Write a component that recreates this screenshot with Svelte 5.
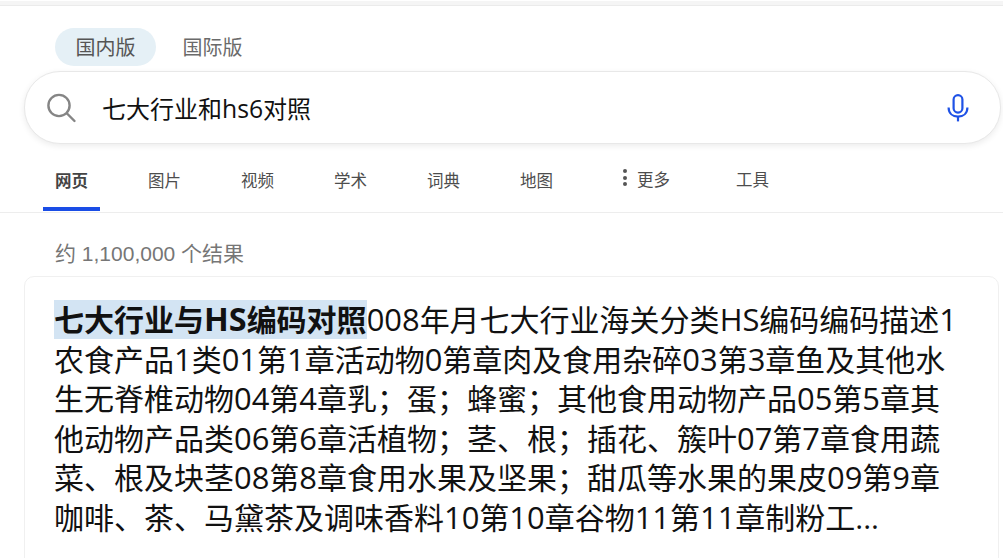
<script>
  const navItems = ['图片', '视频', '学术', '词典', '地图'];
  const split = (text) => text.match(/[0-9A-Za-z]+|[^0-9A-Za-z]+/g);
  const title = split('七大行业与HS编码对照');
  const body = split('008年月七大行业海关分类HS编码编码描述1农食产品1类01第1章活动物0第章肉及食用杂碎03第3章鱼及其他水生无脊椎动物04第4章乳；蛋；蜂蜜；其他食用动物产品05第5章其他动物产品类06第6章活植物；茎、根；插花、簇叶07第7章食用蔬菜、根及块茎08第8章食用水果及坚果；甜瓜等水果的果皮09第9章咖啡、茶、马黛茶及调味香料10第10章谷物11第11章制粉工...');
  const isLatin = (run) => /^[0-9A-Za-z]/.test(run);
</script>

<div class="page">
  <div class="topband"></div>
  <div class="regions">
    <span class="pill active">国内版</span>
    <span class="pill">国际版</span>
  </div>
  <div class="search">
    <svg class="mag" width="32" height="32" viewBox="0 0 32 32" fill="none" stroke="#858585" stroke-width="2.4">
      <circle cx="13" cy="13.5" r="10.6" />
      <path d="M21 21.5 L28.5 29" stroke-linecap="round" />
    </svg>
    <span class="query">七大行业和<span class="lat">hs6</span>对照</span>
    <svg class="mic" width="22" height="28" viewBox="0 0 22 28" fill="none" stroke="#1f52e6" stroke-width="2.2">
      <rect x="6.6" y="1.2" width="8.8" height="17.4" rx="4.4" />
      <path d="M1.6 13.5 C1.6 19.5 5.8 22.6 11 22.6 C16.2 22.6 20.4 19.5 20.4 13.5" />
      <path d="M11 22.6 V27.4" />
    </svg>
  </div>
  <nav class="nav">
    <span class="item current">网页</span>
    {#each navItems as item}
      <span class="item">{item}</span>
    {/each}
    <span class="item more">
      <span class="dots"><i></i><i></i><i></i></span>更多
    </span>
    <span class="item tools">工具</span>
  </nav>
  <div class="count">约 1,100,000 个结果</div>
  <div class="card">
    <p><strong>{#each title as run}{#if isLatin(run)}<span class="lat">{run}</span>{:else}{run}{/if}{/each}</strong>{#each body as run}{#if isLatin(run)}<span class="lat">{run}</span>{:else}{run}{/if}{/each}</p>
  </div>
</div>

<style>
  :global(body) {
    margin: 0;
    background: #fff;
  }
  .page {
    width: 1003px;
    height: 558px;
    overflow: hidden;
    background: #fff;
    font-family: "Open Sans", "Noto Sans CJK SC", sans-serif;
  }
  .topband {
    height: 5px;
    margin-top: 1px;
    background: #f5f5f5;
    border-bottom: 1px solid #ebebeb;
    box-sizing: border-box;
  }
  .regions {
    display: flex;
    align-items: center;
    margin: 22px 0 0 55px;
    height: 38px;
    gap: 6px;
  }
  .pill {
    padding: 0 20.5px;
    height: 38px;
    line-height: 39px;
    border-radius: 19px;
    font-size: 20px;
    color: #6a6a6a;
  }
  .pill.active {
    background: #e5f0f6;
    color: #555;
  }
  .search {
    display: flex;
    align-items: center;
    box-sizing: border-box;
    width: 977px;
    height: 73px;
    margin: 5px 0 0 24px;
    padding: 0 31px 0 21px;
    background: #fff;
    border: 1px solid #e8e8e8;
    border-radius: 36px;
    box-shadow: 0 2px 6px rgba(0, 0, 0, 0.08);
  }
  .mag {
    flex: none;
  }
  .query {
    margin-left: 24px;
    font-size: 24px;
    color: #111;
    flex: 1;
  }
  .lat {
    font-size: 1.03em;
    line-height: 1;
  }
  .mic {
    flex: none;
  }
  .nav {
    display: flex;
    height: 69px;
    padding-left: 43px;
    gap: 36px;
    border-bottom: 1px solid #ededed;
    box-sizing: border-box;
  }
  .item {
    position: relative;
    box-sizing: border-box;
    height: 68px;
    padding: 23px 12px 0;
    font-size: 16.5px;
    line-height: 28px;
    color: #4d4d4d;
  }
  .current {
    font-weight: 700;
    color: #444;
  }
  .current::after {
    content: "";
    position: absolute;
    left: 0;
    right: 0;
    bottom: 1px;
    height: 4px;
    background: #1a4de6;
  }
  .more {
    display: flex;
    margin-left: 10px;
    padding-top: 22px;
  }
  .dots {
    display: flex;
    flex-direction: column;
    gap: 2.5px;
    margin: 3px 10px 0 0;
  }
  .dots i {
    display: block;
    width: 4px;
    height: 4px;
    border-radius: 50%;
    background: #555;
  }
  .tools {
    margin-left: 6px;
    padding-top: 22px;
  }
  .count {
    margin: 26px 0 0 55px;
    font-family: "Liberation Sans", "Noto Sans CJK SC", sans-serif;
    font-size: 21px;
    line-height: 30px;
    color: #767676;
  }
  .card {
    box-sizing: border-box;
    width: 975px;
    height: 300px;
    margin: 7px 0 0 24px;
    padding: 23px 38px 0 29px;
    border: 1px solid #f0f0f0;
    border-radius: 10px;
    background: #fff;
  }
  .card p {
    margin: 0;
    font-size: 30px;
    line-height: 39.6px;
    color: #111;
  }
  strong {
    display: inline-block;
    height: 39px;
    line-height: 39px;
    background: #d3e4f3;
    font-weight: 700;
  }
  strong .lat {
    font-size: 1.08em;
  }
</style>
